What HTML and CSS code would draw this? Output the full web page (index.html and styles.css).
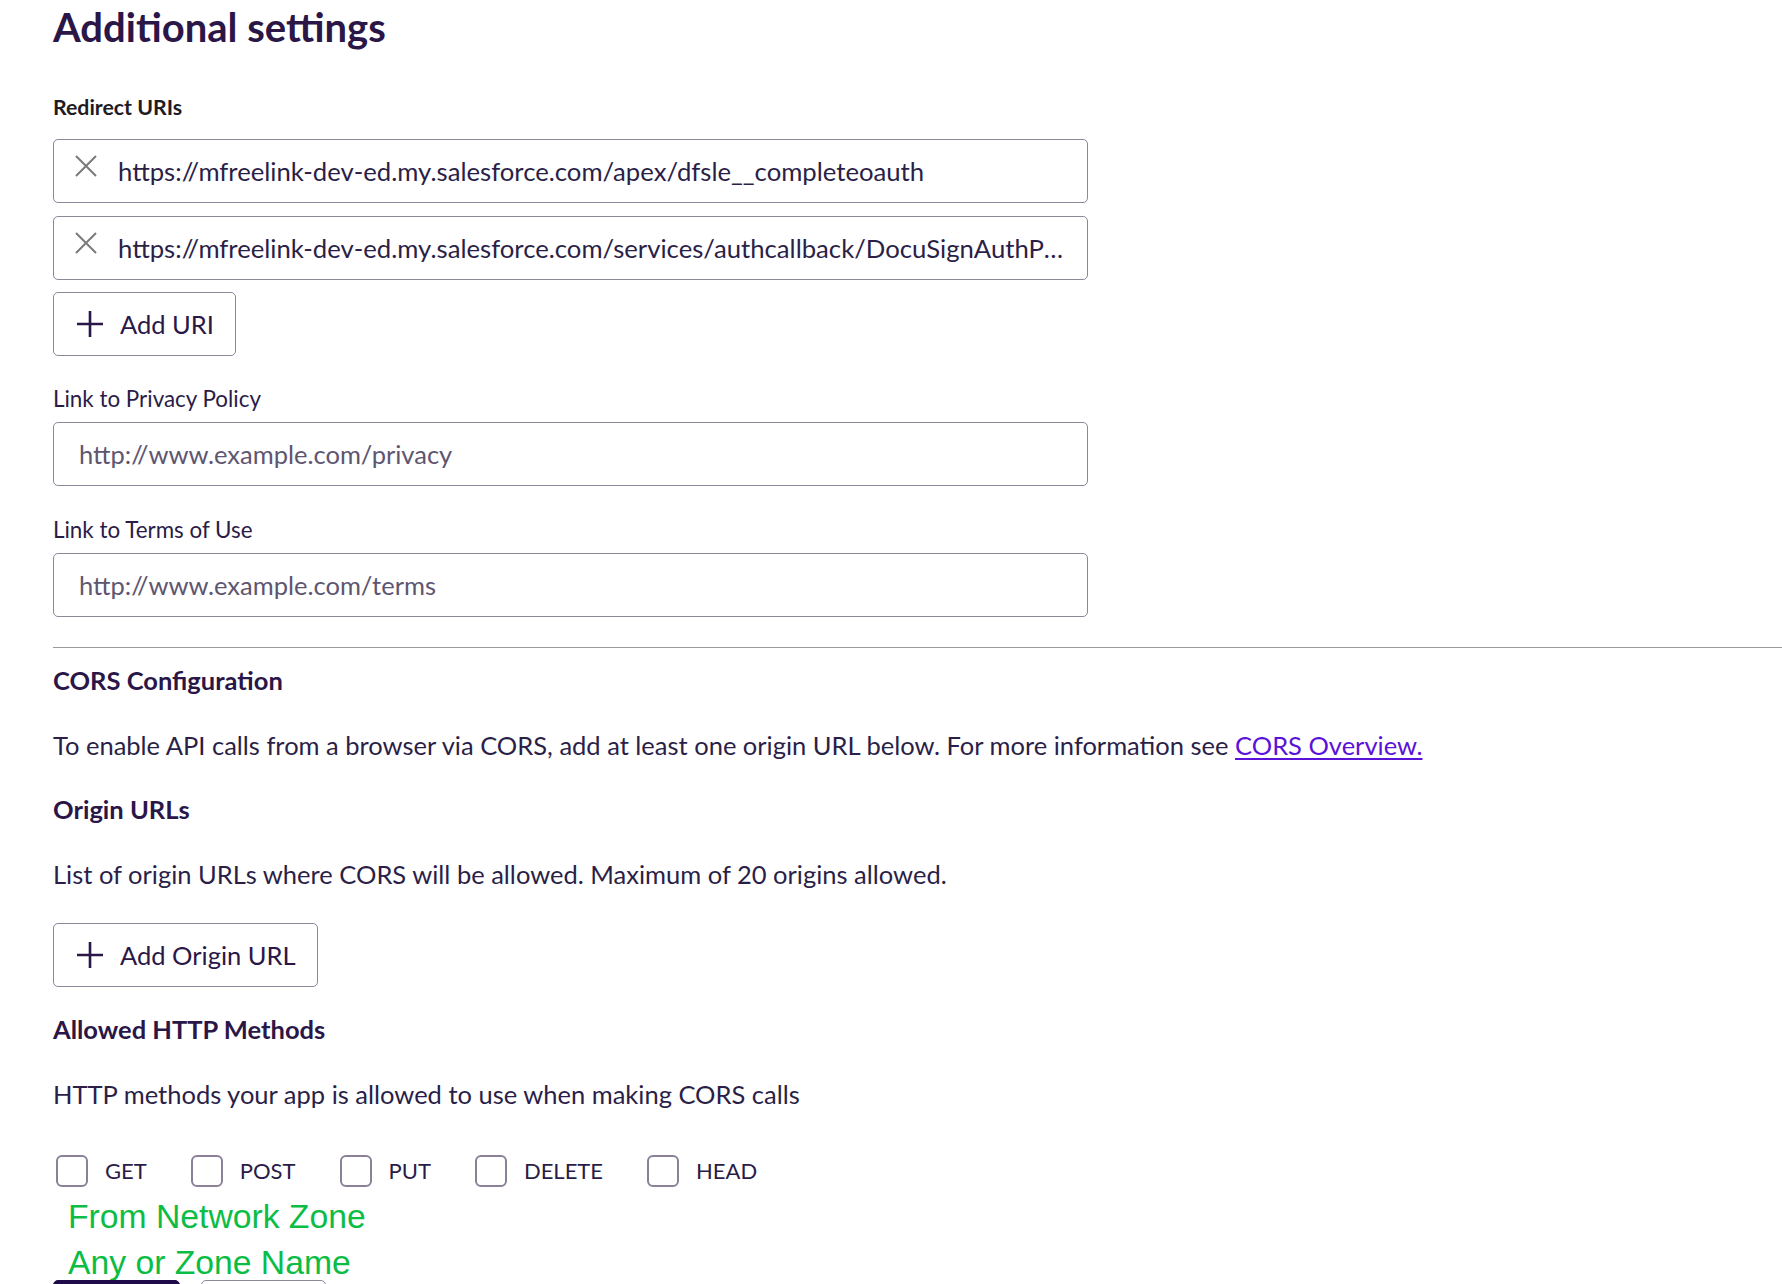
FILE: index.html
```html
<!DOCTYPE html>
<html lang="en">
<head>
<meta charset="utf-8">
<title>Additional settings</title>
<link rel="stylesheet" href="styles.css">
</head>
<body>
<main class="page">
  <h1 class="title">Additional settings</h1>

  <section class="redirects">
    <div class="label label-strong">Redirect URIs</div>
    <div class="uri-row">
      <button class="remove" aria-label="Remove URI">
        <svg viewBox="0 0 24 24" width="24" height="24"><path d="M2 2 L22 22 M22 2 L2 22" /></svg>
      </button>
      <span class="uri-text">https://mfreelink-dev-ed.my.salesforce.com/apex/dfsle__completeoauth</span>
    </div>
    <div class="uri-row">
      <button class="remove" aria-label="Remove URI">
        <svg viewBox="0 0 24 24" width="24" height="24"><path d="M2 2 L22 22 M22 2 L2 22" /></svg>
      </button>
      <span class="uri-text">https://mfreelink-dev-ed.my.salesforce.com/services/authcallback/DocuSignAuthProvider</span>
    </div>
    <button class="btn-outline">
      <svg viewBox="0 0 28 28" width="28" height="28"><path d="M14 1 V27 M1 14 H27" /></svg>
      <span>Add URI</span>
    </button>
  </section>

  <section class="field">
    <label class="label" for="privacy">Link to Privacy Policy</label>
    <input class="text-input" id="privacy" type="text" placeholder="http://www.example.com/privacy">
  </section>

  <section class="field">
    <label class="label" for="terms">Link to Terms of Use</label>
    <input class="text-input" id="terms" type="text" placeholder="http://www.example.com/terms">
  </section>

  <hr class="divider">

  <section class="cors">
    <h2 class="subhead">CORS Configuration</h2>
    <p class="body-text">To enable API calls from a browser via CORS, add at least one origin URL below. For more information see <a class="link" href="#">CORS Overview.</a></p>
    <h3 class="subhead">Origin URLs</h3>
    <p class="body-text">List of origin URLs where CORS will be allowed. Maximum of 20 origins allowed.</p>
    <button class="btn-outline">
      <svg viewBox="0 0 28 28" width="28" height="28"><path d="M14 1 V27 M1 14 H27" /></svg>
      <span>Add Origin URL</span>
    </button>
    <h3 class="subhead subhead-methods">Allowed HTTP Methods</h3>
    <p class="body-text">HTTP methods your app is allowed to use when making CORS calls</p>
    <div class="methods">
      <label class="method"><span class="box"></span>GET</label>
      <label class="method"><span class="box"></span>POST</label>
      <label class="method"><span class="box"></span>PUT</label>
      <label class="method"><span class="box"></span>DELETE</label>
      <label class="method"><span class="box"></span>HEAD</label>
    </div>
  </section>

  <div class="zone">
    <div class="zone-line">From Network Zone</div>
    <div class="zone-line">Any or Zone Name</div>
  </div>

  <div class="actions">
    <button class="btn-primary" aria-label="Save"></button>
    <button class="btn-secondary" aria-label="Cancel"></button>
  </div>
</main>
</body>
</html>
```

FILE: styles.css
```css
html, body {
  margin: 0;
  padding: 0;
  background: #ffffff;
}

body {
  font-family: "Lato", "Noto Sans", sans-serif;
  color: #2a1c47;
  overflow: hidden;
}

.page {
  padding: 3px 0 0 53px;
}

.title {
  margin: 0;
  font-size: 40px;
  line-height: 48px;
  font-weight: 700;
  color: #2a1748;
}

.label {
  display: block;
  font-size: 22.4px;
  line-height: 28px;
  color: #2a1c47;
}

.label-strong {
  font-size: 21.3px;
  font-weight: 700;
  color: #1f1b24;
}

.redirects {
  margin-top: 42px;
  display: flex;
  flex-direction: column;
  align-items: flex-start;
}

.redirects .label {
  margin-bottom: 18px;
}

.uri-row {
  box-sizing: border-box;
  width: 1035px;
  height: 64px;
  border: 1px solid #8c8799;
  border-radius: 5px;
  display: flex;
  align-items: center;
  padding: 0 16px 0 20px;
  margin-bottom: 13px;
}

.remove {
  flex: none;
  border: 0;
  background: none;
  padding: 0;
  margin: 0 20px 0 0;
  width: 24px;
  height: 24px;
  position: relative;
  top: -5px;
}

.remove svg path {
  stroke: #7a7a7a;
  stroke-width: 2;
  fill: none;
}

.uri-text {
  font-size: 25.7px;
  color: #2b1f48;
  white-space: nowrap;
  overflow: hidden;
  text-overflow: ellipsis;
  min-width: 0;
}

.btn-outline {
  box-sizing: border-box;
  height: 64px;
  border: 1px solid #8c8799;
  border-radius: 5px;
  background: #fff;
  display: inline-flex;
  align-items: center;
  gap: 16px;
  padding: 0 21px 0 22px;
  font-family: inherit;
  font-size: 25.5px;
  color: #2a1748;
  cursor: pointer;
}

.redirects .btn-outline {
  margin-top: -1px;
}

.btn-outline svg path {
  stroke: #2a1748;
  stroke-width: 2.6;
  fill: none;
}

.field {
  margin-top: 29px;
}

.field + .field {
  margin-top: 30px;
}

.field .label {
  margin-bottom: 9px;
}

.text-input {
  box-sizing: border-box;
  display: block;
  width: 1035px;
  height: 64px;
  border: 1px solid #8c8799;
  border-radius: 5px;
  padding: 0 25px;
  font-family: inherit;
  font-size: 25.5px;
  color: #2b1f48;
  outline: none;
}

.text-input::placeholder {
  color: #5e5670;
  opacity: 1;
}

.divider {
  margin: 30px 0 0 0;
  border: 0;
  border-top: 1px solid #9a9a9a;
  height: 0;
}

.cors {
  display: flex;
  flex-direction: column;
  align-items: flex-start;
}

.subhead {
  margin: 0;
  font-size: 25.5px;
  line-height: 30px;
  font-weight: 700;
  color: #2a1748;
}

.cors > .subhead:first-child {
  margin-top: 17px;
}

.body-text {
  margin: 35px 0 34px 0;
  font-size: 25.5px;
  line-height: 30px;
  color: #2b1f48;
}

.link {
  color: #5b12d8;
  text-decoration: underline;
  text-underline-offset: 3px;
}

.subhead-methods {
  margin-top: 27px;
}

.methods {
  margin-top: 12px;
  padding-left: 3px;
  display: flex;
  align-items: center;
  gap: 44px;
}

.method {
  display: flex;
  align-items: center;
  gap: 17px;
  font-size: 22px;
  line-height: 32px;
  color: #2a1c47;
}

.box {
  box-sizing: border-box;
  width: 32px;
  height: 32px;
  border: 2.5px solid #8a8198;
  border-radius: 6px;
  background: #fff;
}

.zone {
  margin: 6px 0 0 15px;
  font-family: "Liberation Sans", Arial, sans-serif;
  font-size: 33.7px;
  line-height: 46px;
  color: #0bbd45;
}

.actions {
  margin-top: -5px;
  display: flex;
  gap: 21px;
}

.btn-primary,
.btn-secondary {
  box-sizing: border-box;
  height: 56px;
  width: 127px;
  border-radius: 5px;
  padding: 0;
}

.btn-primary {
  background: #1f0a4a;
  border: 1px solid #1f0a4a;
}

.btn-secondary {
  width: 125px;
  background: #fff;
  border: 1px solid #8c8799;
}
```
